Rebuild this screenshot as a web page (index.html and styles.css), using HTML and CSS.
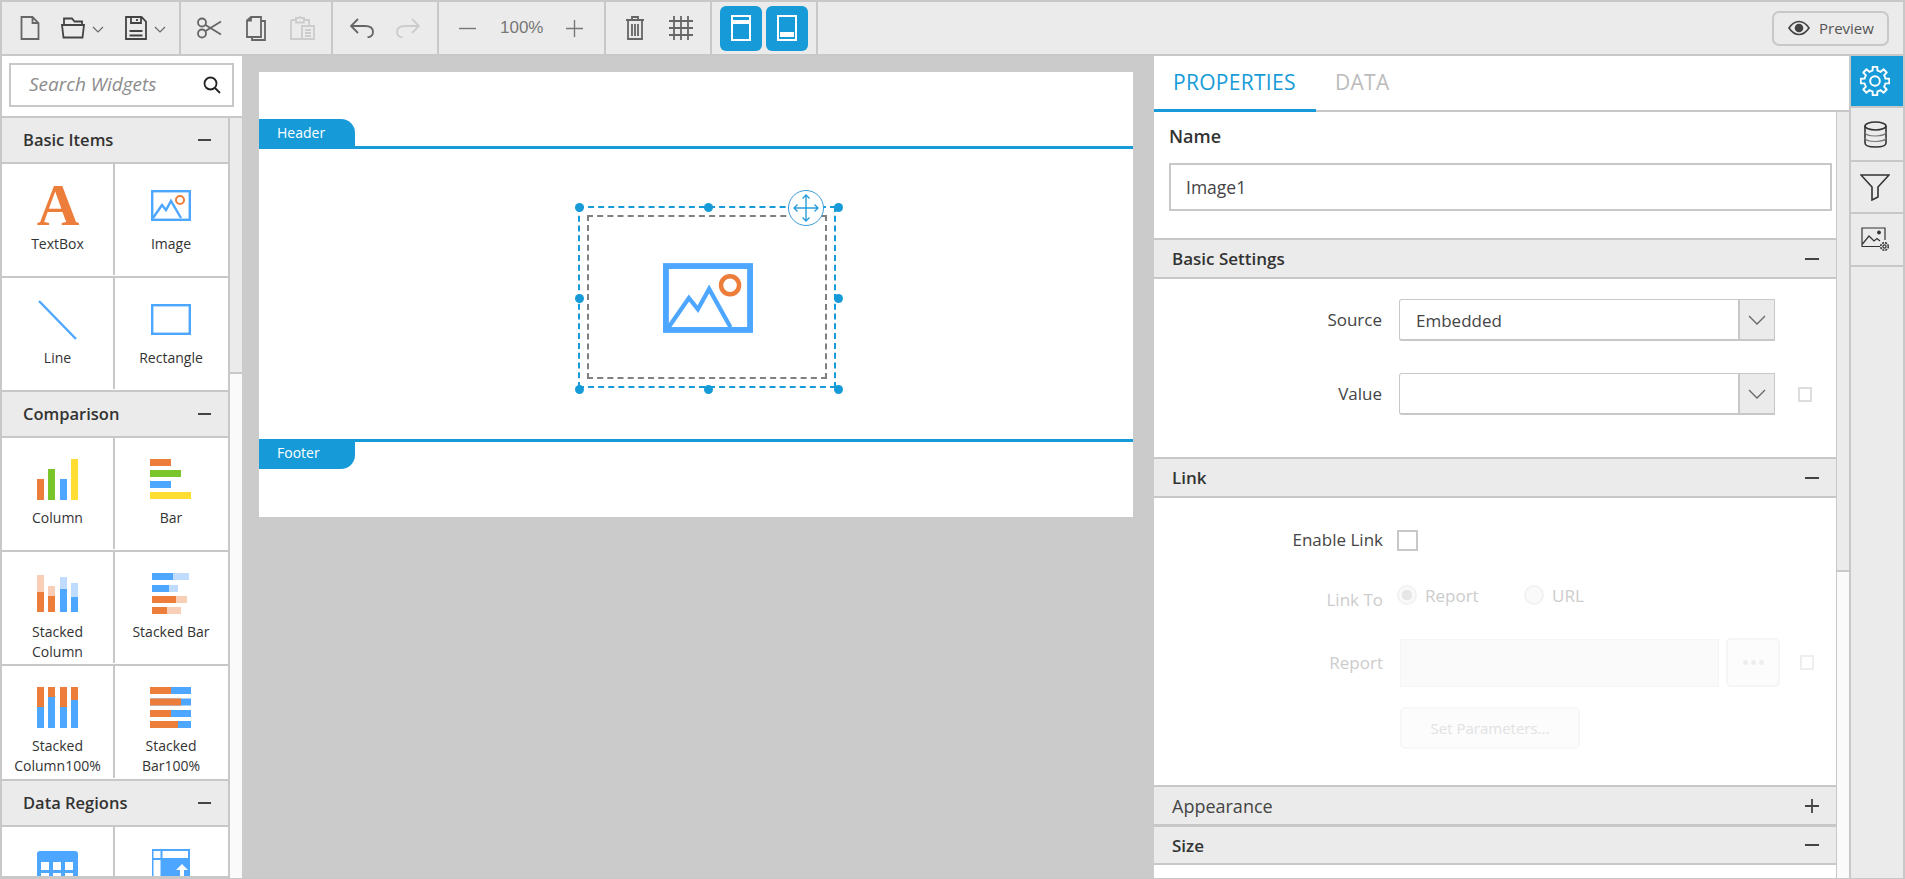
FILE: index.html
```html
<!DOCTYPE html>
<html lang="en">
<head>
<meta charset="utf-8">
<title>Report Designer</title>
<link rel="stylesheet" href="styles.css">
</head>
<body>
<div class="app">
  <header class="toolbar">
    <div class="tgroup g1">
      <svg class="i" width="20" height="24" viewBox="0 0 20 24"><path d="M1.5 1H12.5L18.5 7V23H1.5Z M12.5 1V7H18.5"/></svg>
      <div class="combo">
        <svg class="i dark" width="24" height="22" viewBox="0 0 24 22"><path d="M3 8V1.5H11L13.5 4.5H21V8M1 8H23L21.5 20.5H2.5Z"/></svg>
        <svg class="chev" width="12" height="7" viewBox="0 0 12 7"><path d="M1 1L6 6L11 1"/></svg>
      </div>
      <div class="combo">
        <svg class="i dark" width="22" height="24" viewBox="0 0 22 24"><path d="M1 1H16.5L21 5.5V23H1Z M6 1V7H16V1 M12 3V5 M4.5 15H17.5 M4.5 19.5H17.5"/></svg>
        <svg class="chev" width="12" height="7" viewBox="0 0 12 7"><path d="M1 1L6 6L11 1"/></svg>
      </div>
    </div>
    <div class="tgroup g2">
      <svg class="i" width="25" height="22" viewBox="0 0 25 22"><circle cx="5" cy="5.5" r="4"/><circle cx="5" cy="16.5" r="4"/><path d="M8.5 8L24 17.5M8.5 14L24 4.5"/></svg>
      <svg class="i" width="20" height="25" viewBox="0 0 20 25"><path d="M1 4.5L5 1H15V21H1Z M5 1V4.5H1 M15 5H19V24H6V21"/></svg>
      <svg class="i off" width="25" height="24" viewBox="0 0 25 24"><path d="M1 4H6V2H8.5L10 .8L11.5 2H14V4H19V9M1 4V23H12M6 4V6.5H14V4M12 10H24V23H12Z M15 14H21M15 17H21M15 20H21"/></svg>
    </div>
    <div class="tgroup g3">
      <svg class="i" width="24" height="20" viewBox="0 0 24 20"><path d="M8 1L1 8L8 15M1 8H15C19.5 8 23 10 23 14C23 17 21 19 17.5 19.5"/></svg>
      <svg class="i off" width="24" height="20" viewBox="0 0 24 20"><path d="M16 1L23 8L16 15M23 8H9C4.500 8 1 10 1 14C1 17 3 19 6.500 19.500"/></svg>
    </div>
    <div class="tgroup g4">
      <svg class="i thin" width="17" height="17" viewBox="0 0 17 17"><path d="M0 8.5H17"/></svg>
      <span class="zoom-value">100%</span>
      <svg class="i thin" width="17" height="17" viewBox="0 0 17 17"><path d="M0 8.500H17M8.500 0V17"/></svg>
    </div>
    <div class="tgroup g5">
      <svg class="i" width="18" height="24" viewBox="0 0 18 24"><path d="M0 4H18M6 4V1H12V4M2 4V23H16V4M6 8V20M9 8V20M12 8V20"/></svg>
      <svg class="i" width="24" height="24" viewBox="0 0 24 24"><path d="M0 5H24M0 12H24M0 19H24M5 0V24M12 0V24M19 0V24"/></svg>
    </div>
    <div class="tgroup g6">
      <button class="blue-btn"><svg class="w" width="20" height="26" viewBox="0 0 20 26"><path d="M1 1H19V25H1Z"/><rect class="fill" x="2" y="5" width="16" height="4"/></svg></button>
      <button class="blue-btn"><svg class="w" width="20" height="26" viewBox="0 0 20 26"><path d="M1 1H19V25H1Z"/><rect class="fill" x="3" y="17" width="14" height="5"/></svg></button>
    </div>
    <div class="tspacer"></div>
    <button class="preview">
      <svg class="eye" width="22" height="16" viewBox="0 0 22 16"><path d="M1 8C4 3.500 7 1.500 11 1.500S18 3.500 21 8C18 12.500 15 14.500 11 14.500S4 12.500 1 8Z"/><circle cx="11" cy="8" r="3.500"/></svg>
      Preview
    </button>
  </header>

  <div class="main">
    <aside class="widgets">
      <div class="search-wrap">
        <div class="search">
          <span class="search-text">Search Widgets</span>
          <svg class="search-icon" width="18" height="18" viewBox="0 0 18 18"><circle cx="7.500" cy="7.500" r="6"/><path d="M12 12L17 17"/></svg>
        </div>
      </div>
      <div class="widget-scroll">
        <div class="widget-list">
          <div class="ghead"><span>Basic Items</span><i class="minus"></i></div>
          <div class="wrow">
            <div class="cell"><svg class="ico" viewBox="0 0 42 42"><text class="glyph-a" x="21" y="40">A</text></svg><span>TextBox</span></div>
            <div class="cell"><svg class="ico" viewBox="0 0 42 42"><rect class="s-blue" x="2.200" y="6.200" width="37.600" height="28.600"/><path class="s-blue" d="M3 33L12 20L16 25L21 16L31 33"/><circle class="s-orange" cx="30" cy="15" r="4"/></svg><span>Image</span></div>
          </div>
          <div class="wrow">
            <div class="cell"><svg class="ico" viewBox="0 0 42 42"><path class="s-blue" d="M2 2L39 40"/></svg><span>Line</span></div>
            <div class="cell"><svg class="ico" viewBox="0 0 42 42"><rect class="s-blue" x="2.200" y="6.200" width="37.600" height="28.600"/></svg><span>Rectangle</span></div>
          </div>
          <div class="ghead"><span>Comparison</span><i class="minus"></i></div>
          <div class="wrow">
            <div class="cell"><svg class="ico" viewBox="0 0 42 42"><rect class="f-orange" x="0" y="20" width="7" height="21"/><rect class="f-green" x="11" y="10" width="7" height="31"/><rect class="f-blue" x="23" y="20" width="7" height="21"/><rect class="f-yellow" x="34" y="0" width="7" height="41"/></svg><span>Column</span></div>
            <div class="cell"><svg class="ico" viewBox="0 0 42 42"><rect class="f-orange" x="0" y="0" width="21" height="7"/><rect class="f-green" x="0" y="11" width="31" height="7"/><rect class="f-blue" x="0" y="22" width="21" height="7"/><rect class="f-yellow" x="0" y="33" width="41" height="7"/></svg><span>Bar</span></div>
          </div>
          <div class="wrow">
            <div class="cell"><svg class="ico" viewBox="0 0 42 42"><rect class="f-lorange" x="0" y="2" width="7" height="17"/><rect class="f-orange" x="0" y="19" width="7" height="20"/><rect class="f-lorange" x="11" y="13" width="7" height="10"/><rect class="f-orange" x="11" y="23" width="7" height="16"/><rect class="f-lblue" x="23" y="4" width="7" height="12"/><rect class="f-blue" x="23" y="16" width="7" height="23"/><rect class="f-lblue" x="34" y="10" width="7" height="14"/><rect class="f-blue" x="34" y="24" width="7" height="15"/></svg><span>Stacked<br>Column</span></div>
            <div class="cell"><svg class="ico" viewBox="0 0 42 42"><rect class="f-lblue" x="2" y="0" width="37" height="7"/><rect class="f-blue" x="2" y="0" width="21" height="7"/><rect class="f-lblue" x="2" y="12" width="26" height="7"/><rect class="f-blue" x="2" y="12" width="17" height="7"/><rect class="f-lorange" x="2" y="23" width="35" height="7"/><rect class="f-orange" x="2" y="23" width="24" height="7"/><rect class="f-lorange" x="2" y="34" width="29" height="7"/><rect class="f-orange" x="2" y="34" width="15" height="7"/></svg><span>Stacked Bar</span></div>
          </div>
          <div class="wrow tall">
            <div class="cell"><svg class="ico" viewBox="0 0 42 42"><rect class="f-blue" x="0" y="0" width="7" height="41"/><rect class="f-orange" x="0" y="0" width="7" height="20"/><rect class="f-blue" x="11" y="0" width="7" height="41"/><rect class="f-orange" x="11" y="0" width="7" height="10"/><rect class="f-blue" x="23" y="0" width="7" height="41"/><rect class="f-orange" x="23" y="0" width="7" height="20"/><rect class="f-blue" x="34" y="0" width="7" height="41"/><rect class="f-orange" x="34" y="0" width="7" height="13"/></svg><span>Stacked<br>Column100%</span></div>
            <div class="cell"><svg class="ico" viewBox="0 0 42 42"><rect class="f-blue" x="0" y="0" width="41" height="7"/><rect class="f-orange" x="0" y="0" width="21" height="7"/><rect class="f-blue" x="0" y="11.500" width="41" height="7"/><rect class="f-orange" x="0" y="11.500" width="31" height="7"/><rect class="f-blue" x="0" y="23" width="41" height="7"/><rect class="f-orange" x="0" y="23" width="21" height="7"/><rect class="f-blue" x="0" y="34" width="41" height="7"/><rect class="f-orange" x="0" y="34" width="28" height="7"/></svg><span>Stacked<br>Bar100%</span></div>
          </div>
          <div class="ghead"><span>Data Regions</span><i class="minus"></i></div>
          <div class="wrow clipped">
            <div class="cell"><svg class="ico" viewBox="0 0 42 42"><rect class="f-blue" x="0" y="3" width="41" height="42" rx="3"/><rect class="f-white" x="4" y="14" width="8" height="8"/><rect class="f-white" x="16" y="14" width="8" height="8"/><rect class="f-white" x="28" y="14" width="8" height="8"/><rect class="f-white" x="4" y="25" width="8" height="8"/><rect class="f-white" x="16" y="25" width="8" height="8"/><rect class="f-white" x="28" y="25" width="8" height="8"/></svg></div>
            <div class="cell"><svg class="ico" viewBox="0 0 42 42"><rect class="f-blue" x="2" y="1" width="38" height="41"/><rect class="f-white" x="3.500" y="3" width="7" height="7"/><rect class="f-white" x="12.500" y="3" width="25.500" height="7"/><rect class="f-white" x="3.500" y="12" width="7" height="30"/><path class="f-white" d="M32 16L38 22H34V30H30V22H26Z"/></svg></div>
          </div>
        </div>
        <div class="track track-left"><div class="thumb thumb-left"></div></div>
      </div>
    </aside>

    <section class="canvas">
      <div class="page">
        <div class="band-top"><div class="tag tag-head">Header</div></div>
        <div class="report-body">
          <div class="sel">
            <div class="inner">
              <svg class="picture" width="90" height="70" viewBox="0 0 40 31"><rect class="s-blue thick" x="1.300" y="1.300" width="37.400" height="28.400"/><path class="s-blue thin-m" d="M2.500 28.500L11.500 15.500L15.500 20.500L20.500 11.500L30 28.500"/><circle class="s-orange" cx="29.800" cy="9.800" r="4"/></svg>
            </div>
            <i class="dot d-tl"></i><i class="dot d-tm"></i><i class="dot d-tr"></i>
            <i class="dot d-ml"></i><i class="dot d-mr"></i>
            <i class="dot d-bl"></i><i class="dot d-bm"></i><i class="dot d-br"></i>
            <div class="move"><svg width="26" height="28" viewBox="0 0 26 28"><path d="M13 1V27M1 14H25M9.500 4.500L13 1L16.500 4.500M9.500 23.500L13 27L16.500 23.500M4.500 10.500L1 14L4.500 17.500M21.500 10.500L25 14L21.500 17.500"/></svg></div>
          </div>
        </div>
        <div class="band-bottom"><div class="tag tag-foot">Footer</div></div>
      </div>
    </section>

    <section class="props">
      <nav class="tabs">
        <div class="tab active">PROPERTIES</div>
        <div class="tab">DATA</div>
      </nav>
      <div class="prop-scroll">
        <div class="prop-list">
          <div class="name-block">
            <div class="name-label">Name</div>
            <div class="name-input">Image1</div>
          </div>
          <div class="phead strong"><span>Basic Settings</span><i class="minus"></i></div>
          <div class="basic">
            <div class="frow"><label class="flabel">Source</label><div class="select"><span class="select-text">Embedded</span><div class="select-arrow"><svg width="18" height="10" viewBox="0 0 18 10"><path d="M1 1L9 9L17 1"/></svg></div></div></div>
            <div class="frow"><label class="flabel">Value</label><div class="select"><span class="select-text"></span><div class="select-arrow"><svg width="18" height="10" viewBox="0 0 18 10"><path d="M1 1L9 9L17 1"/></svg></div></div><i class="mini"></i></div>
          </div>
          <div class="phead strong"><span>Link</span><i class="minus"></i></div>
          <div class="link">
            <div class="frow enable"><label class="flabel">Enable Link</label><i class="check"></i></div>
            <div class="frow linkto"><label class="flabel off-text">Link To</label>
              <i class="radio on"></i><span class="radio-text">Report</span>
              <i class="radio r2"></i><span class="radio-text">URL</span>
            </div>
            <div class="frow report"><label class="flabel off-text">Report</label><div class="dis-input"></div><div class="dis-btn"><b></b><b></b><b></b></div><i class="mini m2"></i></div>
            <div class="frow params"><div class="dis-params">Set Parameters...</div></div>
          </div>
          <div class="phead"><span>Appearance</span><svg class="plus" width="14" height="14" viewBox="0 0 14 14"><path d="M0 7H14M7 0V14"/></svg></div>
          <div class="phead strong size-head"><span>Size</span><i class="minus"></i></div>
          <div class="prop-rest"></div>
        </div>
        <div class="track track-right"><div class="thumb thumb-right"></div></div>
      </div>
    </section>

    <nav class="rail">
      <div class="rail-item active r-a">
        <svg class="gear" width="30" height="30" viewBox="0 0 28 28">
          <g id="tooth-set"><path id="tooth" d="M10.170 4.760L11.750 4.260L11.890 .67H16.110L16.250 4.260L17.830 4.760"/>
          <use href="#tooth" transform="rotate(45 14 14)"/><use href="#tooth" transform="rotate(90 14 14)"/><use href="#tooth" transform="rotate(135 14 14)"/><use href="#tooth" transform="rotate(180 14 14)"/><use href="#tooth" transform="rotate(225 14 14)"/><use href="#tooth" transform="rotate(270 14 14)"/><use href="#tooth" transform="rotate(315 14 14)"/></g>
          <circle cx="14" cy="14" r="4.500"/>
        </svg>
      </div>
      <div class="rail-item r-b"><svg class="r-ico" width="23" height="27" viewBox="0 0 23 27"><ellipse cx="11.500" cy="5" rx="10.500" ry="4"/><path d="M1 5V22C1 24.500 5.500 26 11.500 26S22 24.500 22 22V5"/><path class="lite" d="M1 11C1 13.500 5.500 15 11.500 15S22 13.500 22 11M1 16.500C1 19 5.500 20.500 11.500 20.500S22 19 22 16.500"/></svg></div>
      <div class="rail-item r-c"><svg class="r-ico" width="30" height="27" viewBox="0 0 30 27"><path d="M1 1H29L18 13V23L12 26V13Z"/></svg></div>
      <div class="rail-item r-d"><svg class="r-ico thin2" width="28" height="25" viewBox="0 0 28 25"><path d="M19 19.500H1V1H24V13M1.500 17L8 9L13 14L16 11.500L19 14"/><circle class="dotfill" cx="18" cy="5.500" r="1.300"/><circle cx="23.500" cy="19.500" r="1.600"/><circle class="dash" cx="23.500" cy="19.500" r="3.800"/></svg></div>
      <div class="rail-fill"></div>
    </nav>
  </div>
</div>
</body>
</html>
```

FILE: styles.css
```css
* { box-sizing: border-box; }
html, body { margin: 0; padding: 0; height: 100%; overflow: hidden; }
body { font-family: "Open Sans", "Noto Sans", sans-serif; color: #333; background: #c8c8c8; }
button { font-family: inherit; padding: 0; cursor: pointer; }

.app { width: 1905px; height: 879px; display: flex; flex-direction: column; border: 2px solid #c8c8c8; border-bottom-width: 1px; }

/* toolbar */
.toolbar { height: 52px; flex: none; display: flex; align-items: stretch; background: #ebebeb; }
.tgroup { display: flex; align-items: center; border-right: 2px solid #c8c8c8; }
.g1 { width: 179px; padding-left: 18px; gap: 21px; }
.g2 { width: 152px; padding-left: 16px; gap: 24px; }
.g3 { width: 106px; padding-left: 17px; gap: 22px; }
.g4 { width: 167px; padding-left: 20px; gap: 24px; }
.g5 { width: 106px; padding-left: 20px; gap: 25px; }
.g6 { width: 106px; padding-left: 8px; gap: 4px; }
.combo { display: flex; align-items: center; gap: 7px; }
.i { fill: none; stroke: #666; stroke-width: 1.800; }
.i.dark { stroke: #444; }
.i.off { stroke: #ccc; }
.i.thin { stroke: #777; stroke-width: 1.400; }
.chev { fill: none; stroke: #666; stroke-width: 1.100; margin-top: 3px; }
.zoom-value { font-size: 17px; color: #777; width: 42px; text-align: center; white-space: nowrap; font-family: "Liberation Sans", sans-serif; }
.blue-btn { width: 42px; height: 45px; border: 0; border-radius: 6px; background: #169bd8; display: flex; align-items: center; justify-content: center; }
.w { fill: none; stroke: #fff; stroke-width: 2; }
.w .fill { fill: #fff; stroke: none; }
.tspacer { flex: 1; }
.preview { align-self: center; width: 117px; height: 35px; margin-right: 14px; border: 2px solid #c8c8c8; border-radius: 7px; background: #ebebeb; color: #555; font-size: 15px; display: flex; align-items: center; gap: 9px; padding-left: 14px; }
.eye { fill: none; stroke: #444; stroke-width: 1.600; }
.eye circle { fill: #444; }

.main { flex: 1; min-height: 0; display: flex; margin-top: 2px; }

/* widgets */
.widgets { width: 240px; flex: none; display: flex; flex-direction: column; background: #fff; }
.search-wrap { height: 62px; flex: none; padding: 7px 8px 9px 7px; border-bottom: 2px solid #c8c8c8; }
.search { height: 44px; border: 2px solid #c8c8c8; display: flex; align-items: center; justify-content: space-between; padding: 0 11px 2px 18px; }
.search-text { font-size: 19px; font-style: italic; color: #8c8c8c; white-space: nowrap; }
.search-icon { fill: none; stroke: #222; stroke-width: 1.800; margin-top: 2px; }
.widget-scroll { flex: 1; min-height: 0; display: flex; }
.widget-list { width: 228px; flex: none; border-right: 2px solid #c8c8c8; overflow: hidden; }
.ghead { height: 46px; background: #ebebeb; border-bottom: 2px solid #c8c8c8; display: flex; align-items: center; justify-content: space-between; padding: 0 17px 0 21px; font-size: 16.500px; font-weight: 600; color: #333; }
.ghead span { margin-bottom: 2px; }
.minus { display: block; width: 13px; height: 2px; background: #444; }
.wrow { display: flex; height: 114px; border-bottom: 2px solid #c8c8c8; }
.wrow.tall { height: 115px; }
.wrow.clipped { height: 51px; border-bottom: 2px solid #c8c8c8; overflow: hidden; }
.cell { flex: 0 0 113px; height: 111px; display: flex; flex-direction: column; align-items: center; padding-top: 21px; font-size: 14px; line-height: 20px; text-align: center; color: #333; white-space: nowrap; }
.wrow.tall .cell { height: 112px; }
.cell:first-child { flex-basis: 113px; border-right: 2px solid #c8c8c8; }
.cell + .cell { flex: 1 1 auto; padding-right: 1px; }
.ico { width: 42px; height: 42px; flex: none; margin-bottom: 7px; overflow: visible; }
.glyph-a { font-family: "Liberation Serif", serif; font-weight: 700; font-size: 59px; fill: #ed7d3a; text-anchor: middle; }
.s-blue { fill: none; stroke: #4da6ff; stroke-width: 2.400; }
.s-blue.thick { stroke-width: 2.600; }
.s-blue.thin-m { stroke-width: 1.900; }
.s-orange { fill: none; stroke: #ed7d3a; stroke-width: 2; }
.f-orange { fill: #ed7d3a; }
.f-green { fill: #7ac62a; }
.f-blue { fill: #4da6ff; }
.f-yellow { fill: #ffdd33; }
.f-lorange { fill: #f9ceb6; }
.f-lblue { fill: #bfdcff; }
.f-white { fill: #fff; }

/* tracks */
.track { background: #fafafa; flex: none; display: flex; flex-direction: column; }
.track-left { width: 12px; }
.thumb { background: #ebebeb; border-bottom: 2px solid #c8c8c8; }
.thumb-left { height: 256px; }
.track-right { width: 13px; border-left: 1px solid #c8c8c8; border-right: 0; }
.thumb-right { height: 460px; }

/* canvas */
.canvas { flex: 0 0 912px; background: #cbcbcb; padding: 16px 0 0 17px; }
.page { width: 874px; height: 445px; background: #fff; display: flex; flex-direction: column; }
.band-top { height: 77px; flex: none; padding-top: 47px; border-bottom: 3px solid #169bd8; }
.tag { width: 96px; height: 27px; background: #169bd8; color: #fff; font-size: 14px; line-height: 27px; padding-left: 18px; }
.tag-head { border-top-right-radius: 14px; }
.tag-foot { border-bottom-right-radius: 14px; line-height: 22px; }
.report-body { height: 290px; flex: none; position: relative; }
.band-bottom { border-top: 3px solid #169bd8; flex: 1; }
.sel { position: absolute; left: 319px; top: 57px; width: 258px; height: 182px; border: 2px dashed #169bd8; }
.inner { position: absolute; left: 7px; right: 7px; top: 7px; bottom: 7px; border: 2px dashed #808080; display: flex; align-items: center; justify-content: center; }
.picture { margin: 1px 0 0 2px; }
.dot { position: absolute; width: 9px; height: 9px; border-radius: 50%; background: #169bd8; }
.d-tl { left: -5px; top: -5px; }
.d-tm { left: 124px; top: -5px; }
.d-tr { left: 254px; top: -5px; }
.d-ml { left: -5px; top: 86px; }
.d-mr { left: 254px; top: 86px; }
.d-bl { left: -5px; top: 177px; }
.d-bm { left: 124px; top: 177px; }
.d-br { left: 254px; top: 177px; }
.move { position: absolute; left: 208px; top: -18px; width: 36px; height: 36px; border-radius: 50%; border: 1.500px solid #3a9bd8; background: #fff; display: flex; align-items: center; justify-content: center; }
.move svg { fill: none; stroke: #2b9ddb; stroke-width: 1.400; }

/* properties */
.props { width: 695px; flex: none; background: #fff; display: flex; flex-direction: column; }
.tabs { height: 56px; flex: none; display: flex; border-bottom: 2px solid #c8c8c8; }
.tab { font-size: 21px; font-weight: 500; color: #bbb; padding-top: 12px; margin-left: 19px; letter-spacing: .3px; white-space: nowrap; }
.tab.active { width: 162px; height: 56px; margin-left: 0; padding-left: 19px; color: #169bd8; border-bottom: 3px solid #169bd8; }
.prop-scroll { flex: 1; min-height: 0; display: flex; }
.prop-list { width: 682px; flex: none; }
.name-block { height: 126px; padding: 12px 4px 0 15px; }
.name-label { font-size: 18px; font-weight: 600; line-height: 24px; color: #333; }
.name-input { margin-top: 15px; height: 48px; border: 2px solid #c8c8c8; padding-left: 15px; font-size: 17.500px; line-height: 44px; color: #444; }
.phead { height: 41px; background: #ebebeb; border-top: 2px solid #c8c8c8; border-bottom: 2px solid #c8c8c8; display: flex; align-items: center; justify-content: space-between; padding: 0 17px 0 18px; font-size: 18px; color: #444; }
.phead .minus { width: 14px; }
.phead.strong { font-size: 17px; font-weight: 600; color: #333; }
.phead.size-head { margin-top: -1px; height: 40px; }
.plus { fill: none; stroke: #444; stroke-width: 1.800; }
.basic { height: 178px; padding-top: 20px; display: flex; flex-direction: column; gap: 32px; }
.frow { display: flex; align-items: center; }
.flabel { width: 228px; flex: none; text-align: right; font-size: 17px; color: #444; white-space: nowrap; padding-bottom: 2px; }
.select { width: 376px; height: 42px; margin-left: 17px; display: flex; border-top: 1px solid #c8c8c8; border-left: 1px solid #c8c8c8; border-bottom: 2px solid #c8c8c8; border-right: 1px solid #c8c8c8; border-radius: 3px 0 0 3px; }
.select-text { flex: 1; padding-left: 16px; font-size: 17px; line-height: 41px; color: #444; }
.select-arrow { width: 36px; background: #ebebeb; border-left: 2px solid #c8c8c8; display: flex; align-items: center; justify-content: center; }
.select-arrow svg { fill: none; stroke: #666; stroke-width: 1.300; }
.mini { display: block; width: 14px; height: 15px; margin-left: 23px; border: 2px solid #ddd; }
.link { height: 287px; padding-top: 32px; }
.enable { height: 21px; }
.enable .flabel { width: 229px; }
.check { display: block; width: 21px; height: 21px; margin-left: 14px; border: 2px solid #c8c8c8; }
.off-text { color: #ccc; }
.linkto { margin-top: 34px; height: 20px; }
.linkto .flabel { width: 229px; padding-bottom: 0; position: relative; top: 4px; }
.radio { display: block; width: 20px; height: 20px; margin-left: 14px; border-radius: 50%; border: 2px solid #f2f2f2; background: #fafafa; }
.radio.on { background: radial-gradient(circle, #e6e6e6 0 5px, #fafafa 5.500px); }
.radio.r2 { margin-left: 39px; }
.radio-text { margin-left: 8px; font-size: 17px; color: #ccc; width: 60px; }
.radio-text:last-child { width: auto; }
.report { margin-top: 33px; height: 49px; }
.report .flabel { width: 229px; padding-bottom: 0; }
.dis-input { width: 319px; height: 48px; margin-left: 17px; background: #fafafa; border: 1px solid #f5f5f5; }
.dis-btn { width: 54px; height: 49px; margin-left: 7px; border: 2px solid #f5f5f5; border-radius: 5px; display: flex; align-items: center; justify-content: center; gap: 3px; background: #fcfcfc; }
.dis-btn b { width: 5px; height: 5px; border-radius: 50%; background: #eee; }
.mini.m2 { margin-left: 20px; border-color: #eee; }
.params { margin-top: 20px; padding-left: 246px; }
.dis-params { width: 180px; height: 42px; border: 2px solid #f7f7f7; border-radius: 5px; background: #fcfcfc; text-align: center; line-height: 38px; font-size: 15px; color: #e2e2e2; white-space: nowrap; }
.prop-rest { height: 14px; }

/* rail */
.rail { flex: 1; border-left: 2px solid #c8c8c8; background: #ebebeb; display: flex; flex-direction: column; }
.rail-item { flex: none; display: flex; align-items: center; justify-content: center; border-bottom: 2px solid #c8c8c8; padding-right: 4px; }
.r-a { height: 52px; }
.r-b { height: 54px; }
.r-c { height: 52px; }
.r-d { height: 53px; }
.rail-item.active { background: #169bd8; }
.gear { fill: none; stroke: #fff; stroke-width: 1.800; stroke-linejoin: round; }
.r-ico { fill: none; stroke: #333; stroke-width: 1.600; }
.r-ico .lite { stroke: #777; stroke-width: 1.200; }
.r-ico.thin2 { stroke-width: 1.200; }
.r-ico .dotfill { fill: #333; }
.r-ico .dash { stroke-dasharray: 2 1; stroke-width: 1.500; }
.rail-fill { flex: 1; }
```
